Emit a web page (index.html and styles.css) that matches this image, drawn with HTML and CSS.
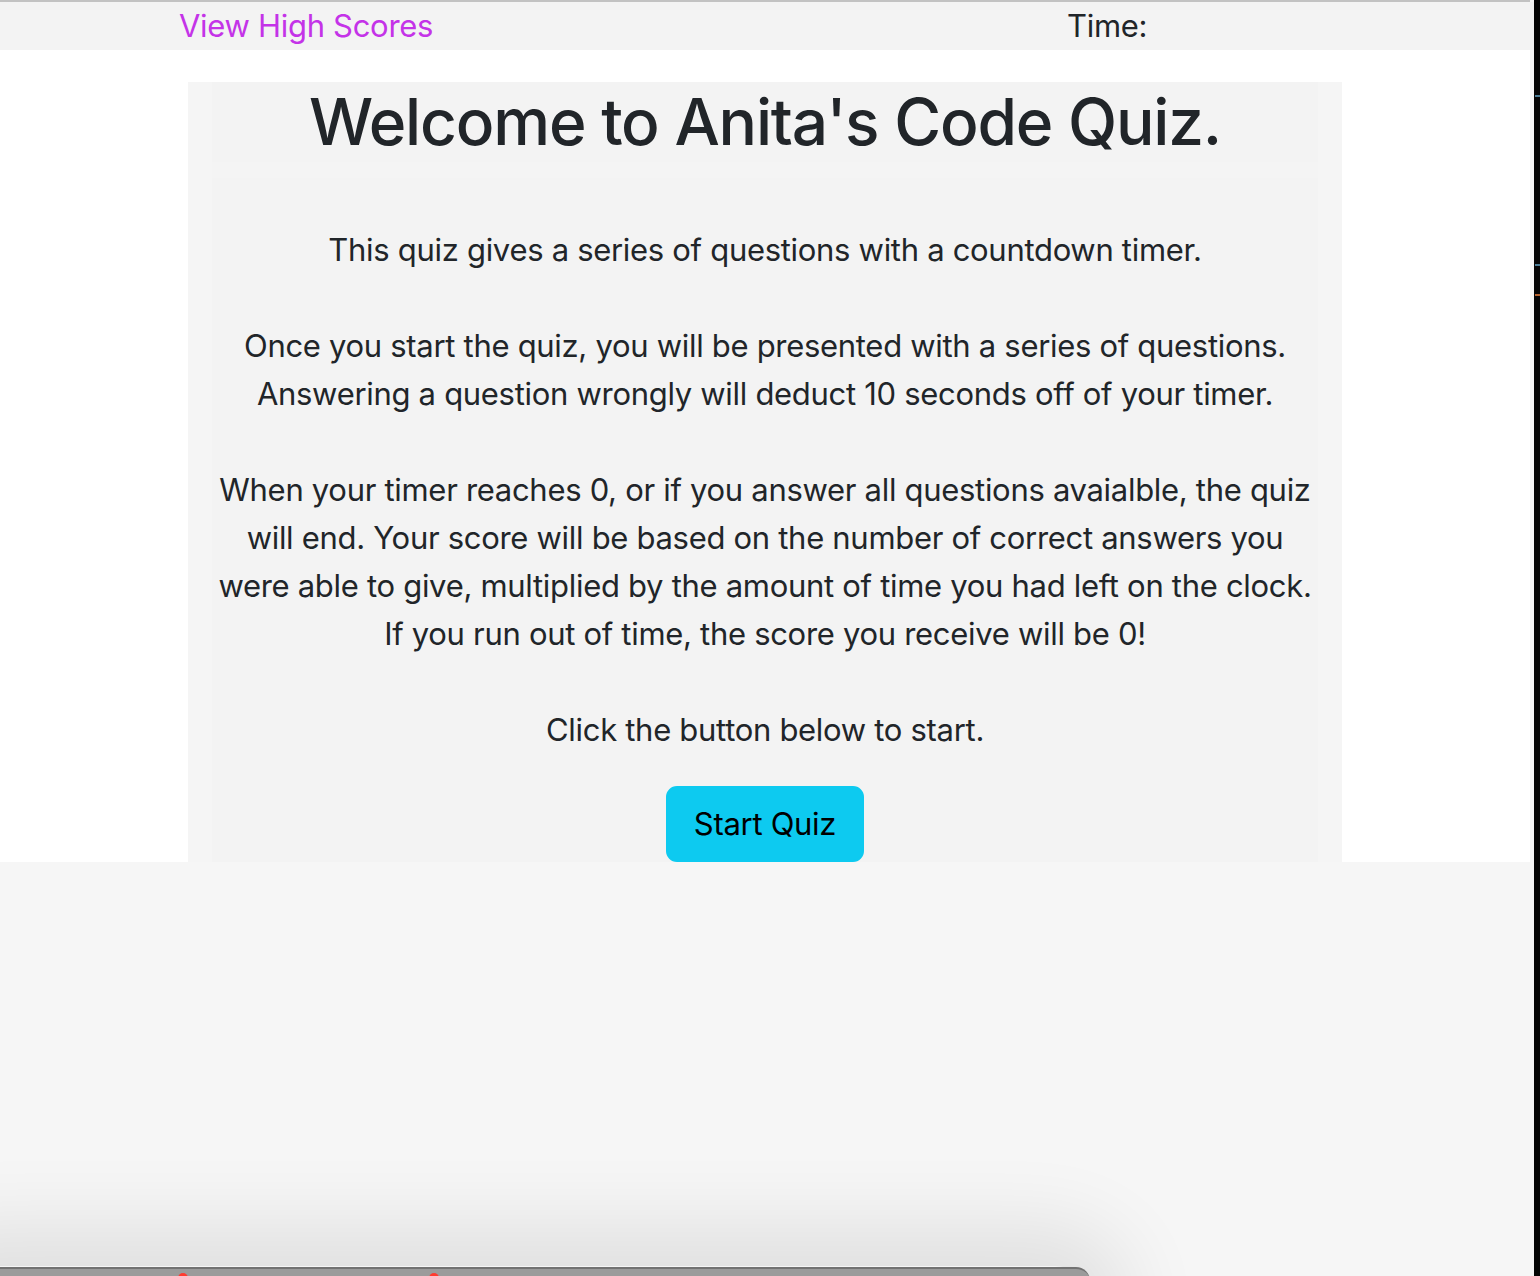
FILE: index.html
```html
<!DOCTYPE html>
<html lang="en">
<head>
<meta charset="utf-8">
<title>Anita's Code Quiz</title>
<link rel="stylesheet" href="styles.css">
</head>
<body>
<div class="page">
  <header class="topbar">
    <a class="highscores" href="#">View High Scores</a>
    <span class="timer">Time:</span>
  </header>
  <main class="container">
    <div class="inner">
      <h1 class="title">Welcome to Anita's Code Quiz.</h1>
      <div class="intro">
        <p class="para">This quiz gives a series of questions with a countdown timer.</p>
        <p class="para">Once you start the quiz, you will be presented with a series of questions.<br>Answering a question wrongly will deduct 10 seconds off of your timer.</p>
        <p class="para">When your timer reaches 0, or if you answer all questions avaialble, the quiz will end. Your score will be based on the number of correct answers you were able to give, multiplied by the amount of time you had left on the clock. If you run out of time, the score you receive will be 0!</p>
        <p class="para">Click the button below to start.</p>
      </div>
      <div class="actions">
        <button class="start-btn" type="button">Start Quiz</button>
      </div>
    </div>
  </main>
</div>
<div class="dock-shadow"></div>
<div class="dock">
  <span class="dot dot-a"></span>
  <span class="dot dot-b"></span>
</div>
<div class="side-strip">
  <span class="tick t1"></span>
  <span class="tick t2"></span>
  <span class="tick t3"></span>
</div>
</body>
</html>
```
FILE: styles.css
```css
html {
  background: #f6f6f6;
  height: 100%;
}
body {
  margin: 0;
  font-family: Inter, "Noto Sans", "Liberation Sans", sans-serif;
  color: #212529;
  font-size: 31px;
  line-height: 48px;
  overflow: hidden;
}
.page {
  background: #ffffff;
  width: 1530px;
  border-top: 2px solid #c2c2c2;
}
.topbar {
  background: #f3f3f3;
  width: 1534px;
  height: 48px;
  display: flex;
  align-items: center;
  padding-left: 179px;
  box-sizing: border-box;
}
.highscores {
  color: #c433e8;
  text-decoration: none;
  width: 888px;
  font-size: 31px;
  letter-spacing: -0.3px;
}
.timer {
  color: #212529;
  font-size: 31px;
  letter-spacing: -0.3px;
}
.container {
  width: 1106px;
  margin: 32px auto 0;
  padding: 0 24px;
  background: #f5f5f5;
}
.inner {
  background: #f4f4f4;
}
.title {
  margin: 0 0 16px;
  background: #f3f3f3;
  font-size: 64px;
  line-height: 80px;
  font-weight: 500;
  text-align: center;
  letter-spacing: -1.2px;
}
.intro {
  background: #f3f3f3;
  text-align: center;
  padding-top: 48px;
}
.para {
  margin: 0 0 48px;
  letter-spacing: -0.3px;
}
.para:last-child {
  margin-bottom: 0;
}
.actions {
  display: flex;
  justify-content: center;
  padding-top: 32px;
  background: #f3f3f3;
}
.start-btn {
  font-family: inherit;
  font-size: 31px;
  line-height: 48px;
  color: #000;
  background: #0dcaf0;
  border: 2px solid #0dcaf0;
  border-radius: 11px;
  padding: 12px 24px;
  width: 198px;
  letter-spacing: -0.3px;
}
.dock-shadow {
  position: fixed;
  left: -60px;
  bottom: -60px;
  width: 1150px;
  height: 70px;
  border-radius: 40px;
  box-shadow: 0 0 80px 40px rgba(0, 0, 0, 0.09);
}
.dock {
  position: fixed;
  left: 0;
  top: 1267px;
  width: 1090px;
  height: 20px;
  background: #9b9b9b;
  border-top: 2px solid #727272;
  border-top-right-radius: 14px;
}
.dot {
  position: absolute;
  top: 4px;
  width: 10px;
  height: 10px;
  border-radius: 50%;
  background: #ff3b30;
}
.dot-a { left: 178px; }
.dot-b { left: 429px; }
.side-strip {
  position: fixed;
  top: 0;
  right: 0;
  width: 6px;
  height: 100%;
  background: #050505;
}
.tick {
  position: absolute;
  left: 1px;
  width: 5px;
  height: 2px;
  background: #4b7d95;
}
.t1 { top: 95px; }
.t2 { top: 264px; }
.t3 { top: 294px; background: #b5622e; }
```
